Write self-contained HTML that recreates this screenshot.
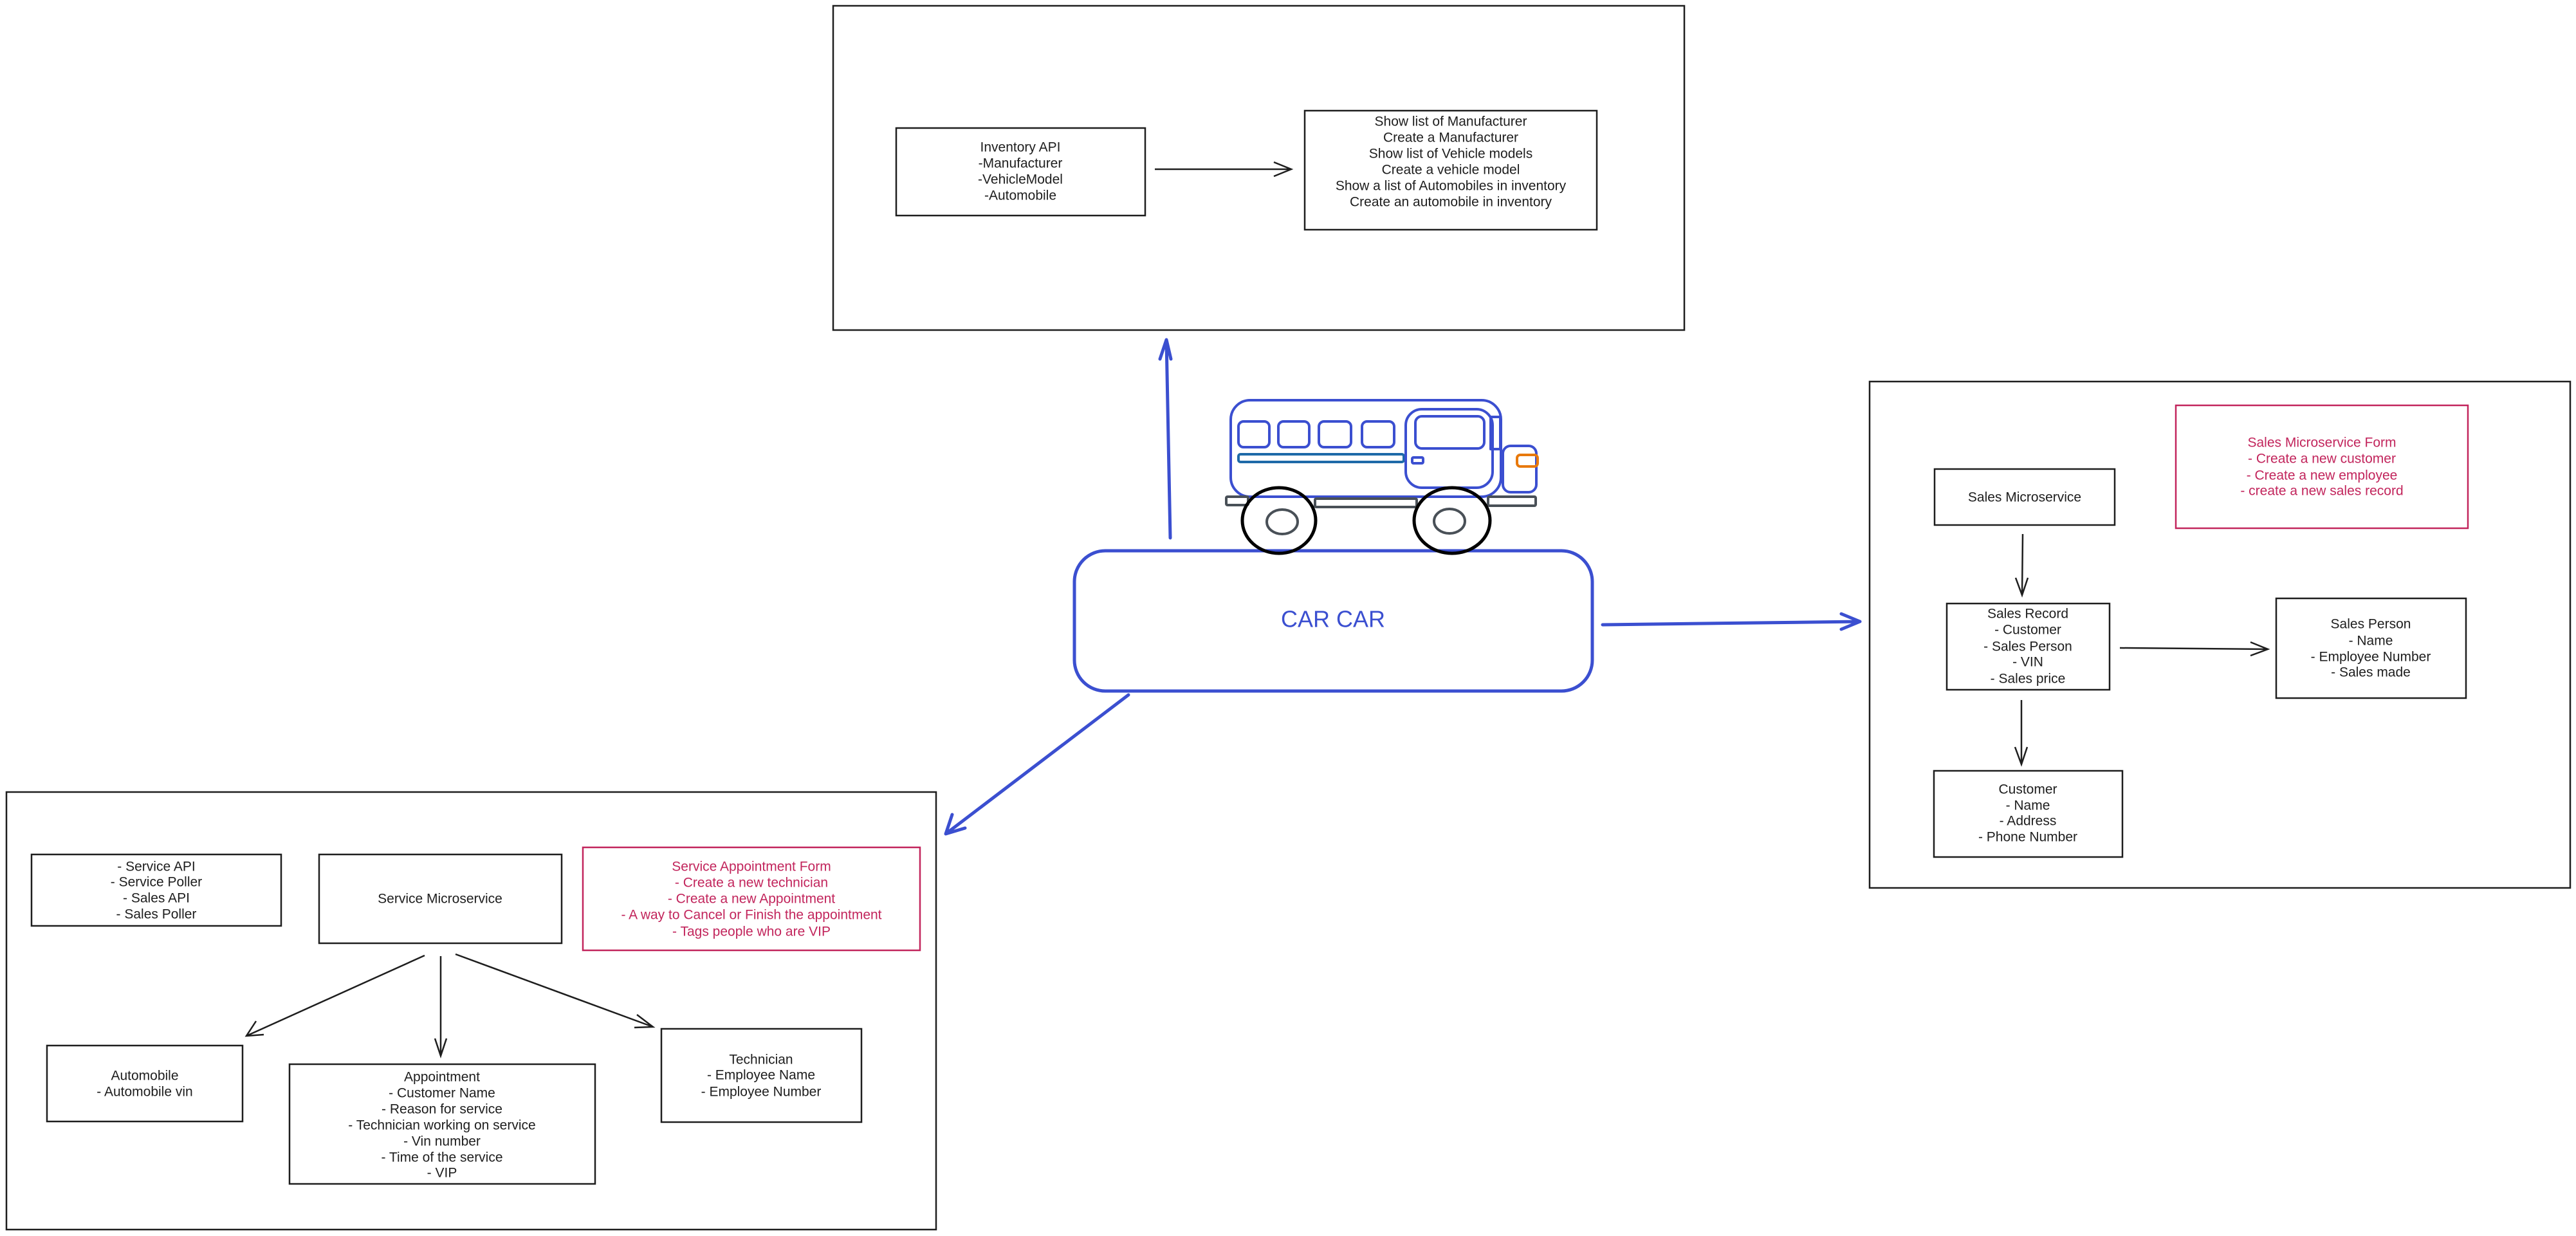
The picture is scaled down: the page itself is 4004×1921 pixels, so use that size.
<!DOCTYPE html>
<html><head><meta charset="utf-8"><style>
html,body{margin:0;padding:0;background:#fff;width:4004px;height:1921px;overflow:hidden}
svg{display:block}
text{font-family:"Liberation Sans",sans-serif;font-size:21px;text-anchor:middle;dominant-baseline:central;fill:#1e1e1e}
.p{fill:#c2255c}
</style></head><body>
<svg width="4004" height="1921" viewBox="0 0 4004 1921" xmlns="http://www.w3.org/2000/svg">
<g fill="none" stroke="#1e1e1e" stroke-width="2.5">
<!-- top section -->
<rect x="1295" y="9" width="1323" height="504"/>
<rect x="1393" y="199" width="387" height="136"/>
<rect x="2028" y="172" width="454" height="185"/>
<path d="M1795 263 L2006 263 M1980 252 L2007 263 L1980 274"/>
<!-- right section -->
<rect x="2906" y="593" width="1089" height="787"/>
<rect x="3007" y="729" width="280" height="87"/>
<rect x="3026" y="938" width="253" height="134"/>
<rect x="3538" y="930" width="295" height="155"/>
<rect x="3006" y="1198" width="293" height="134"/>
<path d="M3144 830 L3143 925 M3133 898 L3143 925 L3152 898"/>
<path d="M3142 1088 L3142 1188 M3132 1161 L3142 1188 L3151 1161"/>
<path d="M3295 1007 L3525 1009 M3498 998 L3525 1009 L3498 1019"/>
<!-- bottom section -->
<rect x="10" y="1231" width="1445" height="680"/>
<rect x="49" y="1328" width="388" height="111"/>
<rect x="496" y="1328" width="377" height="138"/>
<rect x="73" y="1625" width="304" height="118"/>
<rect x="450" y="1654" width="475" height="186"/>
<rect x="1028" y="1599" width="311" height="145"/>
<path d="M660 1485 L383 1610 M398 1587 L383 1610 L410 1608"/>
<path d="M685 1486 L685 1641 M676 1614 L685 1641 L694 1614"/>
<path d="M708 1483 L1015 1596 M990 1577 L1015 1596 L986 1597"/>
</g>
<g fill="none" stroke="#c2255c" stroke-width="2.5">
<rect x="3382" y="630" width="454" height="191"/>
<rect x="906" y="1317" width="524" height="160"/>
</g>
<!-- blue -->
<g fill="none" stroke="#3b4fd0" stroke-width="5" stroke-linecap="round" stroke-linejoin="round">
<rect x="1670" y="856" width="805" height="218" rx="48"/>
<path d="M1819 836 L1813 528 M1803 558 L1813 528 L1820 558"/>
<path d="M2491 971 L2891 966 M2862 954 L2891 966 L2862 978"/>
<path d="M1754 1080 L1470 1296 M1480 1266 L1470 1296 L1500 1287"/>
</g>
<!-- bus -->
<g fill="none" stroke-width="4" stroke-linejoin="round">
<rect x="1913" y="622" width="420" height="150" rx="30" stroke="#3b4fd0"/>
<rect x="1925" y="655" width="48" height="40" rx="8" stroke="#3b4fd0"/>
<rect x="1987" y="655" width="48" height="40" rx="8" stroke="#3b4fd0"/>
<rect x="2050" y="655" width="50" height="40" rx="8" stroke="#3b4fd0"/>
<rect x="2117" y="655" width="50" height="40" rx="8" stroke="#3b4fd0"/>
<rect x="1925" y="706" width="257" height="12" rx="3" stroke="#1e6aa8"/>
<rect x="2185" y="636" width="135" height="122" rx="25" stroke="#3b4fd0"/>
<rect x="2200" y="647" width="107" height="50" rx="10" stroke="#3b4fd0"/>
<rect x="2195" y="711" width="17" height="9" rx="2" stroke="#3b4fd0"/>
<rect x="2317" y="648" width="15" height="50" stroke="#3b4fd0"/>
<rect x="2336" y="693" width="52" height="72" rx="12" stroke="#3b4fd0"/>
<rect x="2358" y="707" width="32" height="18" rx="5" stroke="#e8790c"/>
<rect x="1906" y="772" width="34" height="13" rx="2" stroke="#495057"/>
<rect x="2044" y="775" width="158" height="13" rx="2" stroke="#495057"/>
<rect x="2313" y="772" width="74" height="14" rx="2" stroke="#495057"/>
<ellipse cx="1988" cy="809" rx="57" ry="51" stroke="#000" stroke-width="5"/>
<ellipse cx="2257" cy="809" rx="59" ry="51" stroke="#000" stroke-width="5"/>
<ellipse cx="1993" cy="811" rx="24" ry="19" stroke="#495057"/>
<ellipse cx="2253" cy="810" rx="24" ry="19" stroke="#495057"/>
</g>
<text x="2072" y="962" style="font-size:36px;fill:#3b4fd0">CAR CAR</text>
<!-- top text -->
<text x="1586" y="229">Inventory API</text>
<text x="1586" y="254">-Manufacturer</text>
<text x="1586" y="279">-VehicleModel</text>
<text x="1586" y="304">-Automobile</text>
<text x="2255" y="189">Show list of Manufacturer</text>
<text x="2255" y="214">Create a Manufacturer</text>
<text x="2255" y="239">Show list of Vehicle models</text>
<text x="2255" y="264">Create a vehicle model</text>
<text x="2255" y="289">Show a list of Automobiles in inventory</text>
<text x="2255" y="314">Create an automobile in inventory</text>
<!-- right text -->
<text x="3147" y="773">Sales Microservice</text>
<text class="p" x="3609" y="688">Sales Microservice Form</text>
<text class="p" x="3609" y="713">- Create a new customer</text>
<text class="p" x="3609" y="739">- Create a new employee</text>
<text class="p" x="3609" y="763">- create a new sales record</text>
<text x="3152" y="954">Sales Record</text>
<text x="3152" y="979">- Customer</text>
<text x="3152" y="1005">- Sales Person</text>
<text x="3152" y="1029">- VIN</text>
<text x="3152" y="1055">- Sales price</text>
<text x="3685" y="970">Sales Person</text>
<text x="3685" y="996">- Name</text>
<text x="3685" y="1021">- Employee Number</text>
<text x="3685" y="1045">- Sales made</text>
<text x="3152" y="1227">Customer</text>
<text x="3152" y="1252">- Name</text>
<text x="3152" y="1276">- Address</text>
<text x="3152" y="1301">- Phone Number</text>
<!-- bottom text -->
<text x="243" y="1347">- Service API</text>
<text x="243" y="1371">- Service Poller</text>
<text x="243" y="1396">- Sales API</text>
<text x="243" y="1421">- Sales Poller</text>
<text x="684" y="1397">Service Microservice</text>
<text class="p" x="1168" y="1347">Service Appointment Form</text>
<text class="p" x="1168" y="1372">- Create a new technician</text>
<text class="p" x="1168" y="1397">- Create a new Appointment</text>
<text class="p" x="1168" y="1422">- A way to Cancel or Finish the appointment</text>
<text class="p" x="1168" y="1448">- Tags people who are VIP</text>
<text x="225" y="1672">Automobile</text>
<text x="225" y="1697">- Automobile vin</text>
<text x="687" y="1674">Appointment</text>
<text x="687" y="1699">- Customer Name</text>
<text x="687" y="1724">- Reason for service</text>
<text x="687" y="1749">- Technician working on service</text>
<text x="687" y="1774">- Vin number</text>
<text x="687" y="1799">- Time of the service</text>
<text x="687" y="1823">- VIP</text>
<text x="1183" y="1647">Technician</text>
<text x="1183" y="1671">-  Employee Name</text>
<text x="1183" y="1697">- Employee Number</text>
</svg>
</body></html>
